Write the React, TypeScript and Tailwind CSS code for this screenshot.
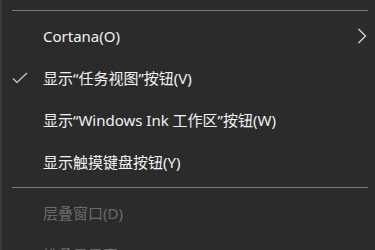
import React from "react";

const Check = () => (
  <svg width="16" height="12" viewBox="0 0 16 12" className="absolute left-[12px] top-1/2 -translate-y-1/2" fill="none">
    <path d="M1 6.5 L5 10.5 L15 1" stroke="#cfcfcf" strokeWidth="1.2" />
  </svg>
);

const Chevron = () => (
  <svg width="10" height="16" viewBox="0 0 10 16" className="absolute right-[8px] top-1/2 -translate-y-1/2" fill="none">
    <path d="M1.5 1 L8.5 8 L1.5 15" stroke="#d6d6d6" strokeWidth="1.3" />
  </svg>
);

function Item({ label, checked, sub, disabled }: { label: string; checked?: boolean; sub?: boolean; disabled?: boolean }) {
  return (
    <div className={`relative h-[42px] flex items-center pl-[43px] text-[15px] ${disabled ? "text-[#6b6b6b]" : "text-[#f2f2f2]"}`}>
      {checked && <Check />}
      <span className="leading-none">{label}</span>
      {sub && <Chevron />}
    </div>
  );
}

const Sep = () => (
  <div className="py-[4px] pl-[12px] pr-[7px]">
    <div className="h-px bg-[#7c7c7c]" />
  </div>
);

export default function App() {
  return (
    <div
      className="w-[375px] h-[250px] overflow-hidden bg-[#2b2b2b] border-l-2 border-[#3a3a3a]"
      style={{ fontFamily: '"Noto Sans", "Noto Sans CJK SC", sans-serif' }}
    >
      <div className="pt-[6px] -ml-[2px]">
        <Sep />
        <Item label="Cortana(O)" sub />
        <Item label="显示“任务视图”按钮(V)" checked />
        <Item label="显示“Windows Ink 工作区”按钮(W)" />
        <Item label="显示触摸键盘按钮(Y)" />
        <Sep />
        <Item label="层叠窗口(D)" disabled />
        <Item label="堆叠显示窗口(E)" disabled />
      </div>
    </div>
  );
}
